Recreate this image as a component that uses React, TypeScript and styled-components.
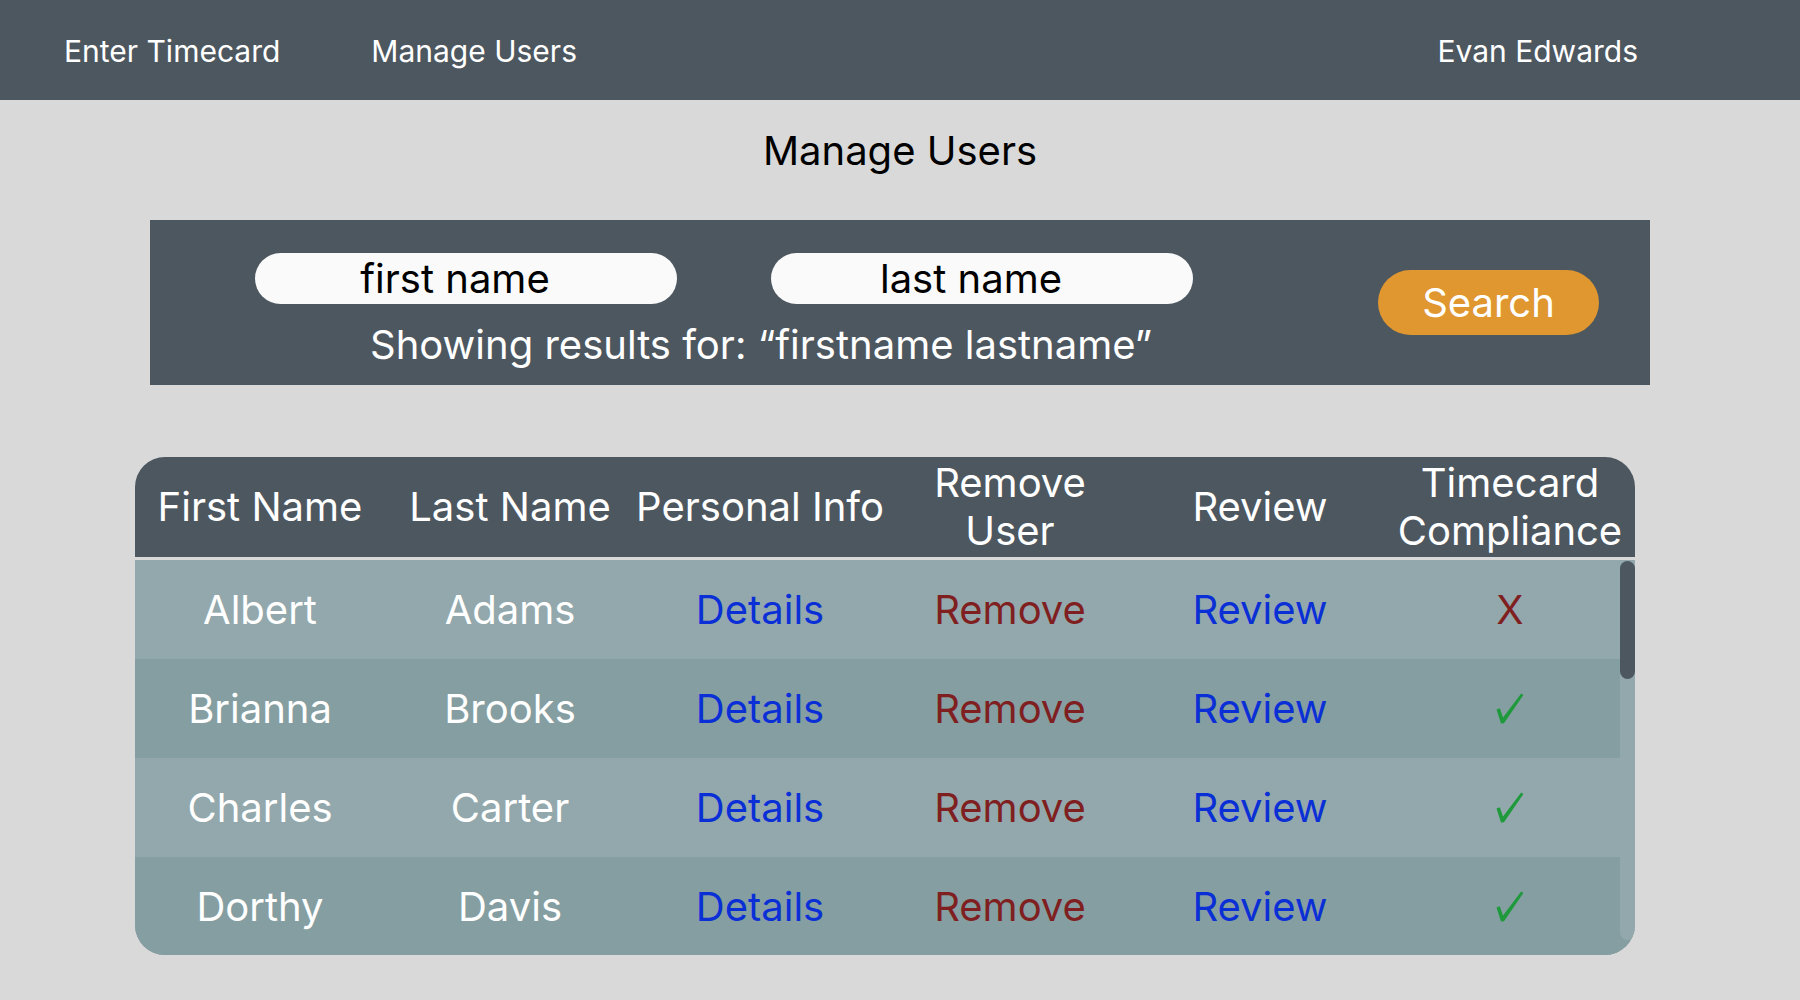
import React from 'react';
import styled, { createGlobalStyle } from 'styled-components';

const GlobalStyle = createGlobalStyle`
  body {
    margin: 0;
    background: #d9d9d9;
    font-family: 'Inter', 'Liberation Sans', sans-serif;
  }
`;

interface IUser {
  first: string;
  last: string;
  compliant: boolean;
}

const users: IUser[] = [
  { first: 'Albert', last: 'Adams', compliant: false },
  { first: 'Brianna', last: 'Brooks', compliant: true },
  { first: 'Charles', last: 'Carter', compliant: true },
  { first: 'Dorthy', last: 'Davis', compliant: true },
];

function CheckMark() {
  return (
    <svg width="28" height="31" viewBox="0 0 28 31" aria-label="compliant">
      <path
        d="M0.5 16.5 L3.8 15.2 L7 24.5 L25.2 0.6 L27.4 2 L8 30.2 L5 30.4 Z"
        fill="#1e9a3c"
      />
    </svg>
  );
}

export default function App() {
  return (
    <>
      <GlobalStyle />
      <NavBar>
        <NavLink>Enter Timecard</NavLink>
        <NavLink>Manage Users</NavLink>
        <NavUser>Evan Edwards</NavUser>
      </NavBar>

      <Title>Manage Users</Title>

      <SearchPanel>
        <SearchFields>
          <InputRow>
            <NameInput placeholder="first name" />
            <NameInput placeholder="last name" />
          </InputRow>
          <ResultText>Showing results for: “firstname lastname”</ResultText>
        </SearchFields>
        <SearchButton>Search</SearchButton>
      </SearchPanel>

      <Table>
        <HeaderRow>
          <HeaderCell>First Name</HeaderCell>
          <HeaderCell>Last Name</HeaderCell>
          <HeaderCell>Personal Info</HeaderCell>
          <HeaderCell>
            Remove
            <br />
            User
          </HeaderCell>
          <HeaderCell>Review</HeaderCell>
          <HeaderCell>
            Timecard
            <br />
            Compliance
          </HeaderCell>
        </HeaderRow>
        <TableBody>
          <Rows>
            {users.map((u, i) => (
              <Row key={u.first} $odd={i % 2 === 0}>
                <Cell>{u.first}</Cell>
                <Cell>{u.last}</Cell>
                <Cell $tone="link">Details</Cell>
                <Cell $tone="danger">Remove</Cell>
                <Cell $tone="link">Review</Cell>
                <Cell $tone="danger">{u.compliant ? <CheckMark /> : 'X'}</Cell>
              </Row>
            ))}
          </Rows>
          <ScrollTrack>
            <ScrollThumb />
          </ScrollTrack>
        </TableBody>
      </Table>
    </>
  );
}

const NavBar = styled.nav`
  height: 100px;
  box-sizing: border-box;
  background: #4d5760;
  display: flex;
  align-items: center;
  gap: 91px;
  padding: 2px 162px 0 64px;
  color: #ffffff;
  font-size: 30px;
`;

const NavLink = styled.div`
  cursor: pointer;
`;

const NavUser = styled.div`
  margin-left: auto;
`;

const Title = styled.h1`
  margin: 29px 0 47px;
  font-size: 40px;
  font-weight: 400;
  line-height: 44px;
  text-align: center;
  color: #000000;
`;

const SearchPanel = styled.section`
  width: 1500px;
  height: 165px;
  box-sizing: border-box;
  margin-left: 150px;
  padding: 33px 51px 0 105px;
  background: #4d5760;
  display: flex;
  align-items: flex-start;
`;

const SearchFields = styled.div`
  display: flex;
  flex-direction: column;
`;

const InputRow = styled.div`
  display: flex;
  gap: 94px;
`;

const NameInput = styled.input`
  width: 422px;
  height: 51px;
  box-sizing: border-box;
  padding: 0 22px 0 0;
  border: none;
  border-radius: 26px;
  background: #fafafa;
  font-family: inherit;
  font-size: 40px;
  text-align: center;
  color: #000000;
  outline: none;
  &::placeholder {
    color: #000000;
  }
`;

const ResultText = styled.div`
  margin-top: 19px;
  padding-left: 115px;
  font-size: 40px;
  line-height: 44px;
  color: #ffffff;
`;

const SearchButton = styled.button`
  margin-left: auto;
  margin-top: 17px;
  width: 221px;
  height: 65px;
  border: none;
  border-radius: 33px;
  background: #e0972f;
  color: #ffffff;
  font-family: inherit;
  font-size: 40px;
  cursor: pointer;
`;

const Table = styled.section`
  width: 1500px;
  margin: 72px 0 0 135px;
  border-radius: 30px;
  overflow: hidden;
`;

const HeaderRow = styled.div`
  height: 100px;
  display: grid;
  grid-template-columns: repeat(6, 250px);
  align-items: center;
  background: #4d5760;
  border-bottom: 3px solid #d9d9d9;
`;

const HeaderCell = styled.div`
  text-align: center;
  color: #ffffff;
  font-size: 40px;
  line-height: 48px;
`;

const TableBody = styled.div`
  display: flex;
  height: 395px;
  background: #859ea1;
`;

const Rows = styled.div`
  flex: 1;
  min-width: 0;
  overflow: hidden;
  display: flex;
  flex-direction: column;
`;

const Row = styled.div<{ $odd: boolean }>`
  height: 99px;
  flex-shrink: 0;
  display: grid;
  grid-template-columns: repeat(6, 250px);
  align-items: center;
  background: ${(p) => (p.$odd ? '#93a8ac' : '#859ea1')};
`;

const toneColors: Record<string, string> = {
  link: '#0a2fd6',
  danger: '#7f1f1f',
};

const Cell = styled.div<{ $tone?: string }>`
  display: flex;
  justify-content: center;
  align-items: center;
  font-size: 40px;
  color: ${(p) => (p.$tone ? toneColors[p.$tone] : '#ffffff')};
`;

const ScrollTrack = styled.div`
  width: 15px;
  flex-shrink: 0;
  background: #93a8ac;
  border-radius: 0 0 8px 8px;
  margin-bottom: 15px;
  padding-top: 1px;
`;

const ScrollThumb = styled.div`
  width: 15px;
  height: 118px;
  border-radius: 8px;
  background: #4d5760;
`;
